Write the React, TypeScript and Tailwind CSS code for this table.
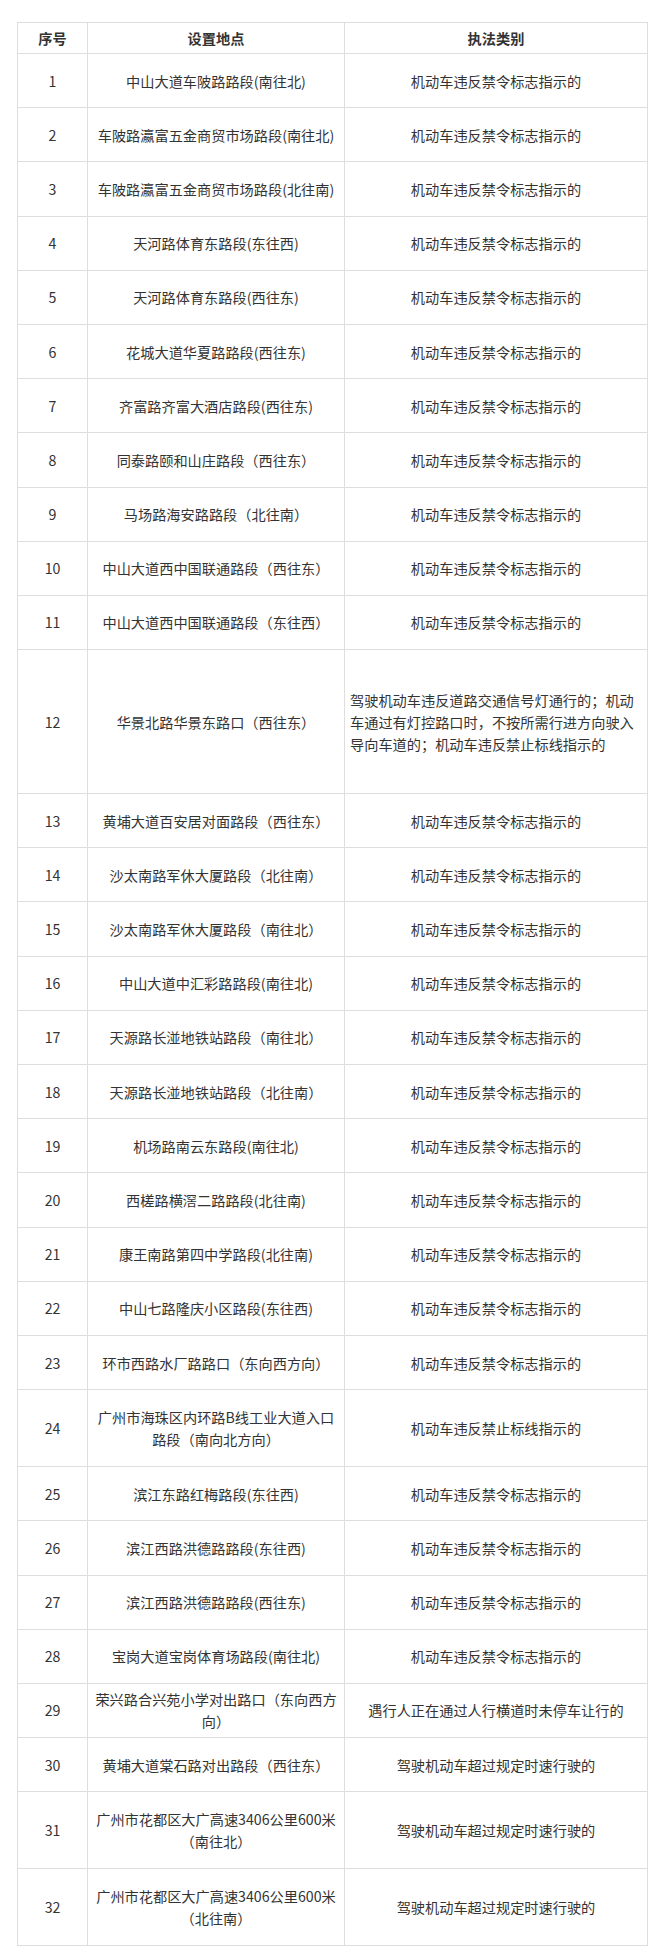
import React from "react"

type Row = {
  no: number
  place: string
  kind: string
  h?: string
  left?: boolean
}

const BAN = "机动车违反禁令标志指示的"
const SPEED = "驾驶机动车超过规定时速行驶的"

const rows: Row[] = [
  { no: 1, place: "中山大道车陂路路段(南往北)", kind: BAN },
  { no: 2, place: "车陂路瀛富五金商贸市场路段(南往北)", kind: BAN },
  { no: 3, place: "车陂路瀛富五金商贸市场路段(北往南)", kind: BAN },
  { no: 4, place: "天河路体育东路段(东往西)", kind: BAN },
  { no: 5, place: "天河路体育东路段(西往东)", kind: BAN },
  { no: 6, place: "花城大道华夏路路段(西往东)", kind: BAN },
  { no: 7, place: "齐富路齐富大酒店路段(西往东)", kind: BAN },
  { no: 8, place: "同泰路颐和山庄路段（西往东）", kind: BAN },
  { no: 9, place: "马场路海安路路段（北往南）", kind: BAN },
  { no: 10, place: "中山大道西中国联通路段（西往东）", kind: BAN },
  { no: 11, place: "中山大道西中国联通路段（东往西）", kind: BAN },
  {
    no: 12,
    place: "华景北路华景东路口（西往东）",
    kind: "驾驶机动车违反道路交通信号灯通行的；机动车通过有灯控路口时，不按所需行进方向驶入导向车道的；机动车违反禁止标线指示的",
    h: "h-[144px]",
    left: true,
  },
  { no: 13, place: "黄埔大道百安居对面路段（西往东）", kind: BAN },
  { no: 14, place: "沙太南路军休大厦路段（北往南）", kind: BAN },
  { no: 15, place: "沙太南路军休大厦路段（南往北）", kind: BAN },
  { no: 16, place: "中山大道中汇彩路路段(南往北)", kind: BAN },
  { no: 17, place: "天源路长湴地铁站路段（南往北）", kind: BAN },
  { no: 18, place: "天源路长湴地铁站路段（北往南）", kind: BAN },
  { no: 19, place: "机场路南云东路段(南往北)", kind: BAN },
  { no: 20, place: "西槎路横滘二路路段(北往南)", kind: BAN },
  { no: 21, place: "康王南路第四中学路段(北往南)", kind: BAN },
  { no: 22, place: "中山七路隆庆小区路段(东往西)", kind: BAN },
  { no: 23, place: "环市西路水厂路路口（东向西方向）", kind: BAN },
  { no: 24, place: "广州市海珠区内环路B线工业大道入口路段（南向北方向）", kind: "机动车违反禁止标线指示的", h: "h-[77px]" },
  { no: 25, place: "滨江东路红梅路段(东往西)", kind: BAN },
  { no: 26, place: "滨江西路洪德路路段(东往西)", kind: BAN },
  { no: 27, place: "滨江西路洪德路路段(西往东)", kind: BAN },
  { no: 28, place: "宝岗大道宝岗体育场路段(南往北)", kind: BAN },
  { no: 29, place: "荣兴路合兴苑小学对出路口（东向西方向）", kind: "遇行人正在通过人行横道时未停车让行的" },
  { no: 30, place: "黄埔大道棠石路对出路段（西往东）", kind: SPEED },
  { no: 31, place: "广州市花都区大广高速3406公里600米（南往北）", kind: SPEED, h: "h-[77px]" },
  { no: 32, place: "广州市花都区大广高速3406公里600米（北往南）", kind: SPEED, h: "h-[77px]" },
]

export default function App() {
  return (
    <div
      className="w-[660px] h-[1956px] bg-white pt-[22px] text-[#333] text-[14.2px] leading-[22px]"
      style={{ fontFamily: "'Noto Sans CJK SC', 'Noto Sans', sans-serif" }}
    >
      <table className="ml-[17px] w-[630px] table-fixed border-collapse">
        <colgroup>
          <col className="w-[70px]" />
          <col className="w-[257px]" />
          <col className="w-[303px]" />
        </colgroup>
        <thead>
          <tr className="h-[31px]">
            <th className="border border-[#dedede] px-[5px] font-bold text-center">序号</th>
            <th className="border border-[#dedede] px-[5px] font-bold text-center">设置地点</th>
            <th className="border border-[#dedede] px-[5px] font-bold text-center">执法类别</th>
          </tr>
        </thead>
        <tbody>
          {rows.map((r) => (
            <tr key={r.no} className={r.h ?? "h-[54.2px]"}>
              <td className="border border-[#dedede] px-[5px] text-center align-middle">{r.no}</td>
              <td className="border border-[#dedede] px-[5px] text-center align-middle">{r.place}</td>
              <td
                className={
                  r.left
                    ? "border border-[#dedede] px-[5px] text-left align-middle"
                    : "border border-[#dedede] px-[5px] text-center align-middle"
                }
              >
                {r.kind}
              </td>
            </tr>
          ))}
        </tbody>
      </table>
    </div>
  )
}
